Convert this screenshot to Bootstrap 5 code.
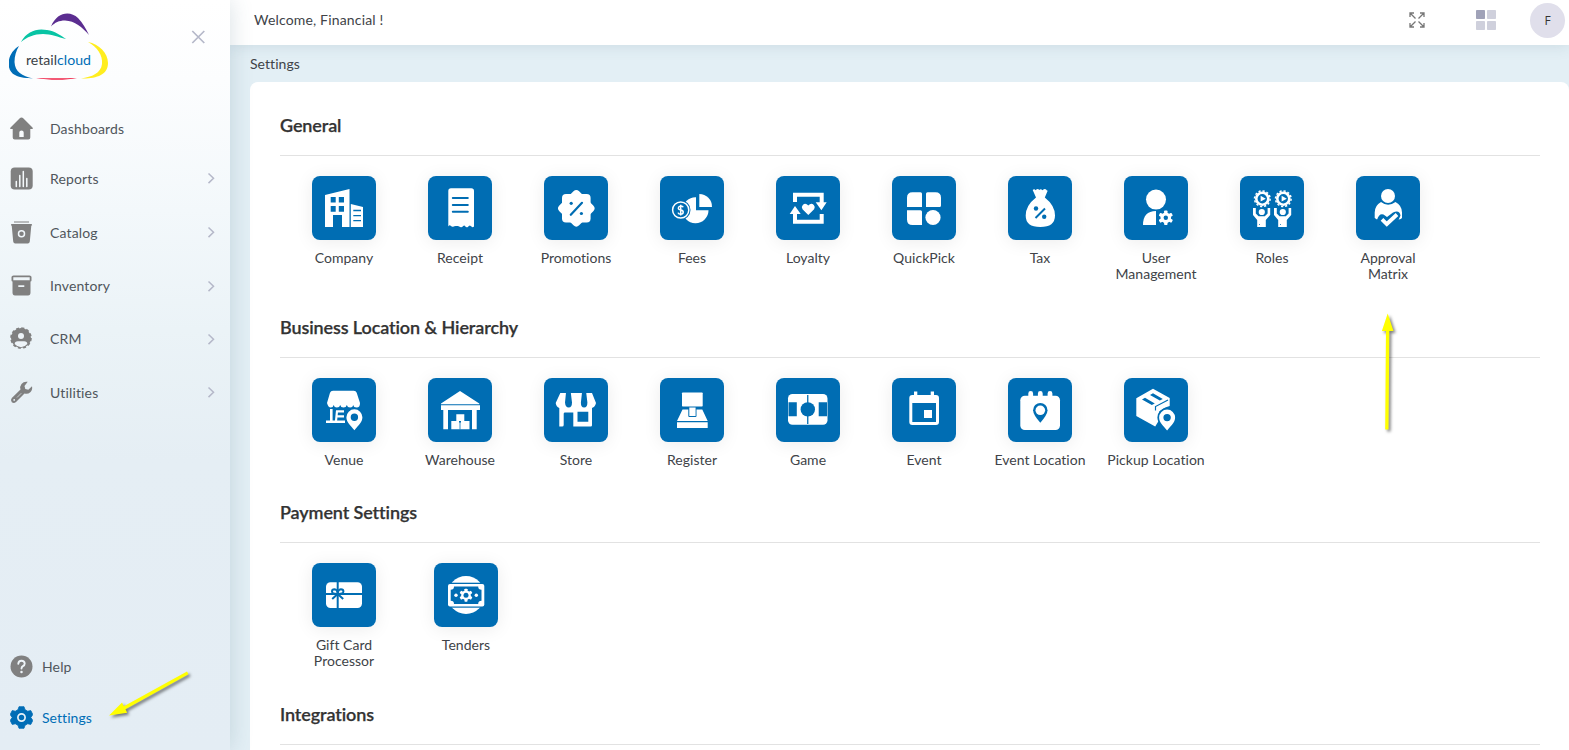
<!DOCTYPE html>
<html lang="en">
<head>
<meta charset="utf-8">
<meta name="viewport" content="width=device-width, initial-scale=1">
<title>Settings</title>
<link href="https://cdn.jsdelivr.net/npm/bootstrap@5.3.0/dist/css/bootstrap.min.css" rel="stylesheet">
<style>
body{font-family:Lato,"Open Sans",sans-serif;font-size:14px;color:#404348;background:#e3eff5;height:750px}
.side{width:230px;background:linear-gradient(180deg,#fff 0,#fcfdfe 80px,#f3f8fb 210px,#ebf3f7 330px,#e5eef4 460px,#e4edf4 100%);box-shadow:0 0 22px rgba(60,100,120,.2);z-index:3;position:relative}
.brandrow{height:103px}
.logo{width:100px;height:68px;margin:13px 0 0 9px}
.closer{margin:29px 24px 0 0}
.side a{color:#50565c;text-decoration:none;letter-spacing:.15px}
.side .nav-row{height:53.3px;padding:0 13px 0 10px}
.side .nav-row.first{height:50px}
.side .nav-row.next{margin-top:2.7px}
.side .nav-row span{margin-left:17px}
.side .foot-row{height:51px;padding-left:10px}
.side .foot-row span{margin-left:9px}
.side .foot{padding-bottom:7px}
.side a.on{color:#006db6;letter-spacing:.05px}
.gi{fill:#808080}
.topbar{height:45px;background:#fff;box-shadow:0 0 16px rgba(60,100,120,.16);z-index:2;position:relative}
.hello{padding-left:24px;margin-top:-6px;letter-spacing:.17px}
.gridicon{margin:0 34px 0 51px}
.actions{margin-bottom:5px}
.avatar-dot{width:35px;height:35px;background:#e0dfeb;font:12px "Open Sans",sans-serif;color:#333}
.crumb{height:37px;line-height:38px;padding-left:20px;letter-spacing:.05px}
.sheet{margin-left:20px;background:#fff;border-radius:8px;padding:29px 29px 0 30px}
.group{height:202px}
.group.short{height:185px}
.group.last{height:auto}
.group h2{font-size:18px;line-height:28px;font-weight:600;margin:0;padding-bottom:16px;border-bottom:1px solid #e2e2e2;color:#333;letter-spacing:-.11px;-webkit-text-stroke:.25px #333}
.tiles{padding:20px 0 0 6px}
.tile{width:116px}
.tiles.wide{padding-left:3px}
.tiles.wide .tile{width:122px}
.pic{width:64px;height:64px;border-radius:8px;background:#006db3;box-shadow:0 2px 18px rgba(0,0,0,.08);fill:#fff;stroke:none}
.tile p{margin:10px 0 0;line-height:16px;text-align:center;letter-spacing:.02px}
.b{fill:#006db3}.bs{stroke:#006db3;fill:none}.ws{stroke:#fff;fill:none}
.marks{position:absolute;left:0;top:0;z-index:5;pointer-events:none}
</style>
</head>
<body class="overflow-hidden">
<svg width="0" height="0" class="position-absolute">
<defs>
<path id="pin" d="M0-8a8 8 0 0 1 8 8c0 5-4 8-8 13c-4-5-8-8-8-13a8 8 0 0 1 8-8zM0-3.7a3.7 3.7 0 1 0 0 7.4a3.7 3.7 0 0 0 0-7.4z" fill-rule="evenodd"/>
<g id="cog"><rect x="-1.7" y="-7.3" width="3.4" height="14.6" rx=".8"/><rect x="-1.7" y="-7.3" width="3.4" height="14.6" rx=".8" transform="rotate(60)"/><rect x="-1.7" y="-7.3" width="3.4" height="14.6" rx=".8" transform="rotate(120)"/><circle r="5.3"/></g>
<g id="worker"><circle cx="22.3" cy="22.7" r="6" fill="none" stroke="#fff" stroke-width="2.6"/><circle cx="22.3" cy="22.7" r="7.8" fill="none" stroke="#fff" stroke-width="1.500" stroke-dasharray="2.200 1.880"/><path d="M20.600 19.800l5.200 2.900l-5.200 2.900z"/><circle cx="21.800" cy="36" r="3.100"/><path d="M13 32h2.800v5.500l2.800 2.800h6.200l2.800-2.800V32h2.600v7l-4.400 5v7h-8.600v-7L13 39z"/><circle cx="19.500" cy="48.500" r=".5" class="b"/></g>
<path id="chev" d="M3.500 2.500L8.500 7.300l-5 4.800" stroke="#b5b8c9" stroke-width="1.500" fill="none"/>
</defs>
</svg>
<div class="d-flex h-100">
<aside class="side d-flex flex-column flex-shrink-0 h-100">
  <div class="brandrow d-flex justify-content-between align-items-start">
    <svg class="logo" viewBox="9 13 100 68">
      <path d="M51 26.500C57 12 70 10.500 78 18C83 23 86 29 89 35C82 27 75 21 65 20.500C59 20.500 55 22.500 51 26.500z" fill="#5b2d90"/>
      <path d="M21 42C27 31 37 28 47 30C55 31 60 35 66 39C58 37 51 34 43 34C34 34 27 37 21 42z" fill="#08c4a4"/>
      <path d="M19 46C7 53 5 70 15 75C20 78 27 78 33 78.500C22 76 15 72 14.500 62C14.500 56 16 51 19 46z" fill="#006db6"/>
      <path d="M88 42C99 44 108 53 108 63C108 75 96 79 81 78.500C92 77 101 73 102 64C103 55 97 47 88 42z" fill="#ffed1f"/>
      <path d="M36 78C46 78.300 66 78.300 77 78C66 80.300 50 80.500 36 78z" fill="#ef2348"/>
      <text x="26" y="65" font-size="14" fill="#3a4046" textLength="65" lengthAdjust="spacingAndGlyphs">retail<tspan fill="#006db6">cloud</tspan></text>
    </svg>
    <svg class="closer" width="16" height="16" viewBox="0 0 16 16"><path d="M2.300 2l12 12M14.300 2L2.300 14" stroke="#b5b8c9" stroke-width="1.700" fill="none"/></svg>
  </div>
  <nav class="d-flex flex-column flex-grow-1">
    <a href="#" class="nav-row first d-flex align-items-center"><svg class="gi" width="23" height="23" viewBox="0 0 23 23"><path d="M11.500.5q1 0 2 1L22.500 10.500q.8 1.500-.5 1.500h-1.700v8.500q0 2-2 2H4.700q-2 0-2-2V12H1q-1.300 0-.5-1.500L9.500 1.500q1-1 2-1zM9.300 20h4.400v-4.500q0-2-2.200-2t-2.200 2z" fill-rule="evenodd"/></svg><span>Dashboards</span></a>
    <a href="#" class="nav-row first d-flex align-items-center"><svg class="gi" width="23" height="23" viewBox="0 0 23 23"><rect x=".7" y=".5" width="22" height="22" rx="4"/><path d="M6.300 19.500v-5M9.800 19.500V8.500M13.300 19.500v-15M16.800 19.500v-8" stroke="#f5f9fb" stroke-width="1.500" stroke-linecap="round"/></svg><span>Reports</span><svg class="ms-auto" width="12" height="14" viewBox="0 0 12 14"><use href="#chev"/></svg></a>
    <a href="#" class="nav-row next d-flex align-items-center"><svg class="gi" width="23" height="23" viewBox="0 0 23 23"><path d="M4 .4h15v1.200H4zM1.500 3h20q.7 0 .6 1.500h-.8L19.800 20.500q-.3 2-2 2H5.200q-1.700 0-2-2L1.700 4.500H1Q.8 3 1.500 3z"/><circle cx="11.500" cy="12.800" r="3" fill="none" stroke="#f0f6fa" stroke-width="1.500"/></svg><span>Catalog</span><svg class="ms-auto" width="12" height="14" viewBox="0 0 12 14"><use href="#chev"/></svg></a>
    <a href="#" class="nav-row d-flex align-items-center"><svg class="gi" width="23" height="23" viewBox="0 0 23 23"><path d="M3.500 1.500h16q2 0 2 1.500v3.500q0 1-1 1V18.500q0 3-2.500 3H5q-2.500 0-2.500-3V7.500q-1 0-1-1V3q0-1.500 2-1.500zM3.300 3.200v3h16.400v-3zM8.300 11.300v1.800h6v-1.800z" fill-rule="evenodd"/></svg><span>Inventory</span><svg class="ms-auto" width="12" height="14" viewBox="0 0 12 14"><use href="#chev"/></svg></a>
    <a href="#" class="nav-row d-flex align-items-center"><svg class="gi" width="23" height="23" viewBox="0 0 23 23"><circle cx="11" cy="11" r="10"/><circle cx="11" cy="11" r="9.900" fill="none" stroke="#808080" stroke-width="1.800" stroke-dasharray="3 2.180"/><circle cx="11" cy="9" r="3" fill="#eef4f8"/><path d="M4.700 17q0-2.800 3.200-2.800h6.200q3.200 0 3.200 2.800Q14.500 20.300 11 20.300T4.700 17z" fill="#eef4f8"/></svg><span>CRM</span><svg class="ms-auto" width="12" height="14" viewBox="0 0 12 14"><use href="#chev"/></svg></a>
    <a href="#" class="nav-row d-flex align-items-center"><svg class="gi" width="23" height="23" viewBox="0 0 23 23"><path d="M17.700.8q-3.700-.8-6.200 2.200q-2 2.500-1 5.500L1.800 17q-1.800 2.200 0 4.200q2.100 1.700 4.200-.2l8.500-8.500q3.300 1 5.800-1.200Q22.800 8.800 22 5.200l-3.700 3.600-3-.8-.8-3zM4.200 18a.9.900 0 1 1 0 1.800a.9.900 0 0 1 0-1.800z" fill-rule="evenodd"/><path d="M7 16.500l4.300-4.300" stroke="#c9cfd3" stroke-width=".9"/></svg><span>Utilities</span><svg class="ms-auto" width="12" height="14" viewBox="0 0 12 14"><use href="#chev"/></svg></a>
    <div class="mt-auto foot">
    <a href="#" class="foot-row d-flex align-items-center"><svg class="gi" width="23" height="23" viewBox="0 0 23 23"><circle cx="11.500" cy="11.500" r="11"/><path d="M8.300 8.800q.2-3.100 3.200-3.100t3.200 2.800q0 1.700-1.800 2.700q-1.400.8-1.400 2.400" fill="none" stroke="#eef4f8" stroke-width="1.900" stroke-linecap="round"/><circle cx="11.500" cy="17" r="1.250" fill="#eef4f8"/></svg><span>Help</span></a>
    <a href="#" class="foot-row on d-flex align-items-center"><svg width="23" height="23" viewBox="0 0 23 23" fill="#006db6"><path d="M9 .7h5l1 3 2.700 1.500 3.100-.6 2 4-2 2.900 2 2.900-2 4-3.100-.6L15 19.300l-1 3H9l-1-3-2.700-1.500-3.100.6-2-4 2-2.900-2-2.900 2-4 3.100.6L8 3.700z" stroke="#006db6" stroke-width=".8" stroke-linejoin="round"/><circle cx="11.500" cy="11.500" r="3.600" fill="none" stroke="#e8f2f8" stroke-width="1.700"/></svg><span>Settings</span></a>
    </div>
  </nav>
</aside>
<div class="flex-grow-1 d-flex flex-column h-100">
  <header class="topbar d-flex align-items-center flex-shrink-0">
    <div class="hello">Welcome, Financial !</div>
    <div class="ms-auto d-flex align-items-center actions">
      <svg width="16" height="16" viewBox="0 0 16 16"><path d="M1 5V1h4M11 1h4v4M15 11v4h-4M5 15H1v-4M1.500 1.500l5 5M14.500 1.500l-5 5M14.500 14.500l-5-5M1.500 14.500l5-5" stroke="#777" stroke-width="1.300" fill="none"/></svg>
      <svg class="gridicon" width="20" height="20" viewBox="0 0 20 20"><g fill="#cfd0dc"><rect x="11" width="9" height="9" rx=".8"/><rect y="11" width="9" height="9" rx=".8"/><rect x="11" y="11" width="9" height="9" rx=".8"/></g><rect width="9" height="9" rx=".8" fill="#a0a2b8"/></svg>
      <div class="avatar-dot rounded-circle d-flex align-items-center justify-content-center me-1">F</div>
    </div>
  </header>
  <div class="crumb flex-shrink-0">Settings</div>
  <main class="sheet flex-grow-1 rounded-bottom-0 overflow-hidden">
    <section class="group">
      <h2>General</h2>
      <div class="tiles d-flex">
        <div class="tile d-flex flex-column align-items-center"><svg class="pic" viewBox="0 0 64 64"><path d="M13 19l24.500-6v38H30V39h-9v12h-8zM18.700 21v5.500h5V21zM26.800 21v5.500H32V21zM18.700 30v5.700h5V30zM26.800 30v5.700H32V30z" fill-rule="evenodd"/><path d="M38.800 28L51 31v20H38.800z"/><path class="bs" d="M41.300 34.500H49M41.300 39.600H49M41.300 44.700H49" stroke-width="1.300"/></svg><p>Company</p></div>
        <div class="tile d-flex flex-column align-items-center"><svg class="pic" viewBox="0 0 64 64"><path d="M21 12.200h22.300q2.700 0 2.700 2.700V50.500q-1.300 1.500-2.600 0l-1.500-1q-1.200 0-2 1.500q-1.800.8-2.700-.8t-2.200 0t-2.700.9t-2.300-1t-2.300 0t-2.600.6t-2.400-1t-2.400.8V14.900q0-2.700 2.700-2.700z"/><path class="bs" d="M24.800 21.900h15M24.800 28.900h15M24.800 35.800h15" stroke-width="2" stroke-linecap="round"/></svg><p>Receipt</p></div>
        <div class="tile d-flex flex-column align-items-center"><svg class="pic" viewBox="0 0 64 64"><rect x="18" y="18" width="28.600" height="28.600" rx="4"/><rect x="18.300" y="18.300" width="28" height="28" rx="4" transform="rotate(45 32.300 32.300)"/><path class="bs" d="M26.800 38.800L38 26.800" stroke-width="2.200" stroke-linecap="round"/><circle class="b" cx="27.200" cy="27.300" r="1.600"/><circle class="b" cx="37.400" cy="37.500" r="1.600"/></svg><p>Promotions</p></div>
        <div class="tile d-flex flex-column align-items-center"><svg class="pic" viewBox="0 0 64 64"><path d="M36 21.200v13h12.500A13 13 0 1 1 36 21.200z"/><path d="M39.300 18A12.700 12.700 0 0 1 52 31H39.300z"/><circle cx="20.700" cy="34" r="9.800" class="b"/><circle cx="20.700" cy="34" r="8.100" class="ws" stroke-width="1.500"/><path class="ws" d="M23.200 31.300q-.5-1.400-2.500-1.400t-2.300 1.900t2.300 2.200t2.500 2.200t-2.500 2t-2.600-1.500M20.700 28.700v10.700" stroke-width="1.500"/></svg><p>Fees</p></div>
        <div class="tile d-flex flex-column align-items-center"><svg class="pic" viewBox="0 0 64 64"><path class="ws" d="M19 26v-7.200h26.700V27M45.700 38v7.700H19V37" stroke-width="4"/><path d="M39.700 26.300h11l-5.300 8zM13.700 38h11L19 30zM32.300 39L26.500 33.200q-1.500-2.500.3-4.300q2.700-2.400 5.500.6q2.800-3 5.500-.6q1.800 1.800.3 4.300z"/></svg><p>Loyalty</p></div>
        <div class="tile d-flex flex-column align-items-center"><svg class="pic" viewBox="0 0 64 64"><path d="M20.500 16.300h8q1.500 0 1.500 1.500V31H15v-9.200q0-5.500 5.500-5.500zM34 31V17.800q0-1.500 1.500-1.500h8q5.500 0 5.500 5.500v7.700q0 1.500-1.500 1.500zM15 34.300h13.500q1.500 0 1.500 1.500V49h-9.500q-5.500 0-5.500-5.500z"/><circle cx="41" cy="41.500" r="7.600"/></svg><p>QuickPick</p></div>
        <div class="tile d-flex flex-column align-items-center"><svg class="pic" viewBox="0 0 64 64"><path d="M28 21.500L24.700 14q1.500-1.500 3 .3q1.800-2.200 3.600-.4q1.500-1.500 3.200.4q2.500-2.300 3.800-.5t1.700.2l-3.200 7.500q10.200 8 10.200 18Q47 51 32.300 51T17.700 39.500q0-10 10.300-18z"/><path class="bs" d="M27.500 42l9.500-9.500" stroke-width="2"/><circle class="b" cx="28" cy="32.500" r="2.200"/><circle class="b" cx="36.200" cy="40.800" r="2.200"/></svg><p>Tax</p></div>
        <div class="tile d-flex flex-column align-items-center"><svg class="pic" viewBox="0 0 64 64"><circle cx="32" cy="23.600" r="10"/><path d="M32 35v14H19q0-14 13-14z"/><use href="#cog" x="41.800" y="41.800"/><circle class="b" cx="41.800" cy="41.800" r="2.200"/></svg><p>User<br>Management</p></div>
        <div class="tile d-flex flex-column align-items-center"><svg class="pic" viewBox="0 0 64 64"><use href="#worker"/><use href="#worker" x="21"/></svg><p>Roles</p></div>
        <div class="tile d-flex flex-column align-items-center"><svg class="pic" viewBox="0 0 64 64"><circle cx="32" cy="20" r="7"/><path d="M25 26q7 5.500 14.500 0q6.500 3.500 6.500 10.500v5.500q-1 1.300-3 1.500H21l-2.300-1.500V36.500q0-7 6.300-10.500z"/><path class="b" d="M21 44q2-7 6.500-5.500l3.500 2.500l6-4.500q6.500-3 7.500 3l-2 4.500l-9 8.500h-5z"/><path class="ws" d="M26 43.300l4.800 4.700 10.200-9.500" stroke-width="3.800"/></svg><p>Approval<br>Matrix</p></div>
      </div>
    </section>
    <section class="group short">
      <h2>Business Location &amp; Hierarchy</h2>
      <div class="tiles d-flex">
        <div class="tile d-flex flex-column align-items-center"><svg class="pic" viewBox="0 0 64 64"><path d="M21 12.700h20.700q2.300 0 3 2L48 25q0 4.500-3.200 4.500t-3.500-2.500q-.6 2.500-3.200 2.500t-3.300-2.500q-.6 2.500-3.300 2.500t-3.300-2.500q-.6 2.500-3.300 2.500t-3.200-2.500q-.6 2.500-3 2.500T15 25l3-10.300q.7-2 3-2z"/><path class="ws" d="M19.300 31v12M14 43.700h19" stroke-width="2.600"/><path class="ws" d="M24 33.300h8M25.500 38.300h6.500M24 43l1-10" stroke-width="2.200"/><use href="#pin" x="42.400" y="39.300" stroke="#006db3" stroke-width="1.500" paint-order="stroke"/></svg><p>Venue</p></div>
        <div class="tile d-flex flex-column align-items-center"><svg class="pic" viewBox="0 0 64 64"><path d="M32 13l19.300 12.500v.7H13v-.7zM13 27.200h39v4.800h-3.300v19.300H44V32H20v19.300h-4.700V32H13z"/><path d="M28.300 36.300h8v6.700h5.200v8.300H23.300V43h5z"/><path class="bs" d="M32 43.500v8" stroke-width=".8"/><path class="b" d="M31 43h2v1.500h-2z"/></svg><p>Warehouse</p></div>
        <div class="tile d-flex flex-column align-items-center"><svg class="pic" viewBox="0 0 64 64"><path d="M16.300 15h31.700l4 10q-.8 4-4 5v17.300q0 1.300-1.300 1.300H29.300V34.500h-8.300q-1.300 0-1.300 1.300V47q0 1.600-1.600 1.600h-2.800V30q-3-1-3.600-5z"/><path class="b" d="M22 14.500h4.800l1.200 10q0 5-3.300 5t-3.700-5zM38 14.500h4.200l1.200 10q0 5-3.300 5t-3.200-5zM31.500 14.500h1v0h-1zM33.500 33.700h10.800v10h-10.800z"/></svg><p>Store</p></div>
        <div class="tile d-flex flex-column align-items-center"><svg class="pic" viewBox="0 0 64 64"><rect x="22" y="14.500" width="20.700" height="14" rx=".7"/><path d="M22.500 31.500h5.800V38q0 1 1 1h6.200q1 0 1-1v-6.500h5.800L47.700 43H17zM29.300 29.500h6.300V38h-6.300zM17 44.300h30.700v5.800H17z"/></svg><p>Register</p></div>
        <div class="tile d-flex flex-column align-items-center"><svg class="pic" viewBox="0 0 64 64"><rect x="12" y="16" width="39.500" height="30.800" rx="4.500"/><path class="b" d="M12.500 24.300h8.300v14h-8.300zM42.700 24.300H51v14h-8.300zM31.100 17h1.300v29h-1.300z"/><circle class="b" cx="31.800" cy="31.400" r="7.200"/></svg><p>Game</p></div>
        <div class="tile d-flex flex-column align-items-center"><svg class="pic" viewBox="0 0 64 64"><path d="M22 13.500h3.300V17h13.400v-3.500H42V17h2q3 0 3 3v24q0 3-3 3H20.300q-3 0-3-3V20q0-3 3-3H22zM20.300 25v19h23.700V25z" fill-rule="evenodd"/><path d="M32 32h8v8h-8z"/></svg><p>Event</p></div>
        <div class="tile d-flex flex-column align-items-center"><svg class="pic" viewBox="0 0 64 64"><rect x="12.300" y="17.800" width="39.700" height="34.200" rx="4.500"/><path class="ws" d="M22.700 15.500v5M32.300 15.500v5M42 15.500v5" stroke-width="4.800" stroke-linecap="round"/><path class="b" d="M32.300 25a7.200 7.200 0 0 1 7.200 7.200q0 4.300-7.200 12.500q-7.200-8.200-7.200-12.500a7.200 7.200 0 0 1 7.200-7.200z"/><circle cx="32.300" cy="32.300" r="4.800"/></svg><p>Event Location</p></div>
        <div class="tile d-flex flex-column align-items-center"><svg class="pic" viewBox="0 0 64 64"><path d="M29 10.700l16.700 9.300v8l-4.500 1.500-6 4V42l-4 6.500L12.300 38V20.300z"/><path class="bs" d="M44 22L31.500 28.500v4" stroke-width="1.200"/><path class="b" d="M18 21.500l3-1.700 9.800 5.600-3 1.700zM26 17l3-1.700 9.800 5.600-3 1.700z"/><use href="#pin" x="43.100" y="39.600" stroke="#006db3" stroke-width="3.500" paint-order="stroke"/></svg><p>Pickup Location</p></div>
      </div>
    </section>
    <section class="group">
      <h2>Payment Settings</h2>
      <div class="tiles wide d-flex">
        <div class="tile d-flex flex-column align-items-center"><svg class="pic" viewBox="0 0 64 64"><rect x="14" y="19.300" width="36" height="25.700" rx="4.500"/><path class="bs" d="M14 31h36M25.700 19v26" stroke-width="2"/><path class="bs" d="M25.700 31q-5.700.3-5.700-2.500q0-2.300 2.500-2.300q3 .3 3.200 4.800q.2-4.500 3.200-4.800q2.500 0 2.500 2.300q0 2.800-5.700 2.500zM25.700 31l-5.500 5M25.700 31l5.500 5" stroke-width="2"/></svg><p>Gift Card<br>Processor</p></div>
        <div class="tile d-flex flex-column align-items-center"><svg class="pic" viewBox="0 0 64 64"><circle cx="32" cy="32" r="18.900"/><rect x="13" y="19.700" width="38.300" height="25" class="b"/><rect x="14" y="21" width="36.300" height="22.500" rx="2"/><path class="b" d="M20 23.500h24.200q0 3.300 3.300 3.300v11q-3.300 0-3.300 3.200H20q0-3.200-3.300-3.200v-11q3.300 0 3.300-3.300z"/><use href="#cog" transform="translate(32 32.200) scale(.9)"/><circle class="b" cx="32" cy="32.200" r="2.500"/><circle cx="22" cy="32.200" r="1.700"/><circle cx="42.300" cy="32.200" r="1.700"/></svg><p>Tenders</p></div>
      </div>
    </section>
    <section class="group last"><h2>Integrations</h2></section>
  </main>
</div>
</div>
<svg class="marks" width="1569" height="750" viewBox="0 0 1569 750"><g fill="#ffff00" style="filter:drop-shadow(2px 2px 1.500px rgba(0,0,0,.5))"><path d="M109 715.600L122 702.500 123.900 706.200 187 671.500 188.500 674.300 125.500 709.300 127.200 712.800z"/><path d="M1387.700 313.500L1393.500 331h-4.200L1388.500 429.500h-3.300L1386 331h-4.100z"/></g></svg>
<script src="https://cdn.jsdelivr.net/npm/bootstrap@5.3.0/dist/js/bootstrap.bundle.min.js"></script>
</body>
</html>
